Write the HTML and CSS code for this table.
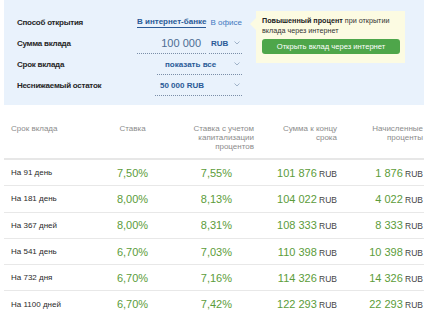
FILE: index.html
```html
<!DOCTYPE html>
<html lang="ru">
<head>
<meta charset="utf-8">
<link rel="stylesheet" href="styles.css">
</head>
<body>
<div class="panel">
  <div class="form">
    <div class="label">Способ открытия</div>
    <div class="field f-way"><span class="tab active">В интернет-банке</span><span class="tab">В офисе</span></div>
    <div class="label">Сумма вклада</div>
    <div class="field f-sum"><span class="amount">100 000</span><span class="cur">RUB<svg class="chev" viewBox="0 0 6 4" width="6" height="4"><path d="M0.5 0.5 L3 3 L5.5 0.5" fill="none" stroke="#9fb2c8" stroke-width="1"/></svg></span></div>
    <div class="label">Срок вклада</div>
    <div class="field f-term"><span class="sel sel-term">показать все<svg class="chev" viewBox="0 0 6 4" width="6" height="4"><path d="M0.5 0.5 L3 3 L5.5 0.5" fill="none" stroke="#9fb2c8" stroke-width="1"/></svg></span></div>
    <div class="label">Неснижаемый остаток</div>
    <div class="field f-rest"><span class="sel sel-rest">50 000 RUB<svg class="chev" viewBox="0 0 6 4" width="6" height="4"><path d="M0.5 0.5 L3 3 L5.5 0.5" fill="none" stroke="#9fb2c8" stroke-width="1"/></svg></span></div>
  </div>
  <div class="promo">
    <p class="promo-text"><b>Повышенный процент</b> при открытии<br>вклада через интернет</p>
    <div class="btn">Открыть вклад через интернет</div>
  </div>
</div>

<div class="table">
  <div class="row head">
    <div class="c1">Срок вклада</div>
    <div class="c2">Ставка</div>
    <div class="c3">Ставка с учетом<br>капитализации<br>процентов</div>
    <div class="c4">Сумма к концу<br>срока</div>
    <div class="c5">Начисленные<br>проценты</div>
  </div>
  <div class="row">
    <div class="c1">На 91 день</div><div class="c2 g">7,50%</div><div class="c3 g">7,55%</div>
    <div class="c4"><span class="g">101 876</span> <span class="rub">RUB</span></div>
    <div class="c5"><span class="g">1 876</span> <span class="rub">RUB</span></div>
  </div>
  <div class="row">
    <div class="c1">На 181 день</div><div class="c2 g">8,00%</div><div class="c3 g">8,13%</div>
    <div class="c4"><span class="g">104 022</span> <span class="rub">RUB</span></div>
    <div class="c5"><span class="g">4 022</span> <span class="rub">RUB</span></div>
  </div>
  <div class="row">
    <div class="c1">На 367 дней</div><div class="c2 g">8,00%</div><div class="c3 g">8,31%</div>
    <div class="c4"><span class="g">108 333</span> <span class="rub">RUB</span></div>
    <div class="c5"><span class="g">8 333</span> <span class="rub">RUB</span></div>
  </div>
  <div class="row">
    <div class="c1">На 541 день</div><div class="c2 g">6,70%</div><div class="c3 g">7,03%</div>
    <div class="c4"><span class="g">110 398</span> <span class="rub">RUB</span></div>
    <div class="c5"><span class="g">10 398</span> <span class="rub">RUB</span></div>
  </div>
  <div class="row">
    <div class="c1">На 732 дня</div><div class="c2 g">6,70%</div><div class="c3 g">7,16%</div>
    <div class="c4"><span class="g">114 326</span> <span class="rub">RUB</span></div>
    <div class="c5"><span class="g">14 326</span> <span class="rub">RUB</span></div>
  </div>
  <div class="row">
    <div class="c1">На 1100 дней</div><div class="c2 g">6,70%</div><div class="c3 g">7,42%</div>
    <div class="c4"><span class="g">122 293</span> <span class="rub">RUB</span></div>
    <div class="c5"><span class="g">22 293</span> <span class="rub">RUB</span></div>
  </div>
</div>
</body>
</html>
```

FILE: styles.css
```css
html, body {
  margin: 0;
  padding: 0;
  background: #fff;
}
body {
  font-family: "Liberation Sans", Arial, sans-serif;
  color: #2a2a2a;
  width: 424px;
  overflow: hidden;
}
.panel {
  margin-left: 4px;
  height: 105px;
  background: #e9f2fc;
  display: flex;
  align-items: flex-start;
}
.form {
  margin-left: 13px;
  margin-top: 12px;
  display: grid;
  grid-template-columns: 120px 105px;
  grid-auto-rows: 21px;
  align-items: stretch;
}
.label {
  font-size: 8px;
  font-weight: bold;
  letter-spacing: -0.25px;
  color: #262626;
  display: flex;
  align-items: center;
  white-space: nowrap;
}
.field {
  display: flex;
  align-items: stretch;
  justify-content: flex-end;
  font-size: 8px;
  font-weight: bold;
  color: #2a5a97;
  white-space: nowrap;
}
.f-way {
  align-items: center;
  justify-content: flex-start;
  gap: 4px;
}
.tab {
  font-weight: normal;
  color: #3f79c0;
}
.tab.active {
  font-weight: bold;
  color: #2a5a97;
  border-bottom: 1px solid #2a5a97;
  padding-bottom: 1px;
}
.amount {
  width: 64px;
  padding-right: 5px;
  font-size: 11px;
  font-weight: normal;
  color: #4d6d93;
  border-bottom: 1px dotted #7a8ea8;
  display: flex;
  align-items: center;
  justify-content: flex-end;
}
.cur {
  margin-left: 3px;
  width: 33px;
  border-bottom: 1px dotted #7a8ea8;
  display: flex;
  align-items: center;
  justify-content: space-between;
  padding-left: 2px;
  box-sizing: border-box;
}
.sel {
  border-bottom: 1px dotted #7a8ea8;
  display: flex;
  align-items: center;
  justify-content: space-between;
  box-sizing: border-box;
}
.sel-term {
  width: 85px;
  padding-left: 8px;
}
.sel-rest {
  width: 87px;
  padding-left: 5px;
}
.chev {
  margin-right: 2px;
  flex: none;
}
.promo {
  position: relative;
  margin-left: 14px;
  margin-top: 11px;
  width: 149px;
  height: 52px;
  box-sizing: border-box;
  background: #fcfbe2;
  padding: 5px 4px 0 6px;
}
.promo::before {
  content: "";
  position: absolute;
  left: -6px;
  top: 7px;
  border-style: solid;
  border-width: 6px 6px 6px 0;
  border-color: transparent #fcfbe2 transparent transparent;
}
.promo-text {
  margin: 0;
  font-size: 7.2px;
  line-height: 10px;
  color: #333;
  white-space: nowrap;
}
.promo-text b {
  color: #222;
}
.btn {
  margin-top: 3px;
  height: 15px;
  width: 138px;
  background: #4ea64a;
  border-radius: 3px;
  color: #fff;
  font-size: 7.6px;
  line-height: 15px;
  text-align: center;
}
.table {
  margin-top: 15px;
  margin-left: 4px;
}
.row {
  display: grid;
  grid-template-columns: 106px 45px 100px 83px 86px;
  height: 25.3px;
  align-items: center;
  border-bottom: 1px solid #e8e8e8;
  font-size: 8px;
}
.row.head {
  height: 40px;
  box-sizing: border-box;
  align-items: start;
  padding-top: 4px;
  border-bottom: 2px solid #e7e7e7;
  color: #8c8c8c;
  font-size: 8px;
  line-height: 9px;
}
.c1 {
  padding-left: 7px;
}
.c2 {
  text-align: center;
}
.c3 {
  text-align: right;
  padding-right: 23px;
}
.head .c3 {
  padding-right: 1px;
}
.c4, .c5 {
  text-align: right;
  padding-right: 1px;
}
.g {
  color: #5c9c3a;
  font-size: 11px;
}
.rub {
  color: #444;
  font-size: 8.5px;
}
```
